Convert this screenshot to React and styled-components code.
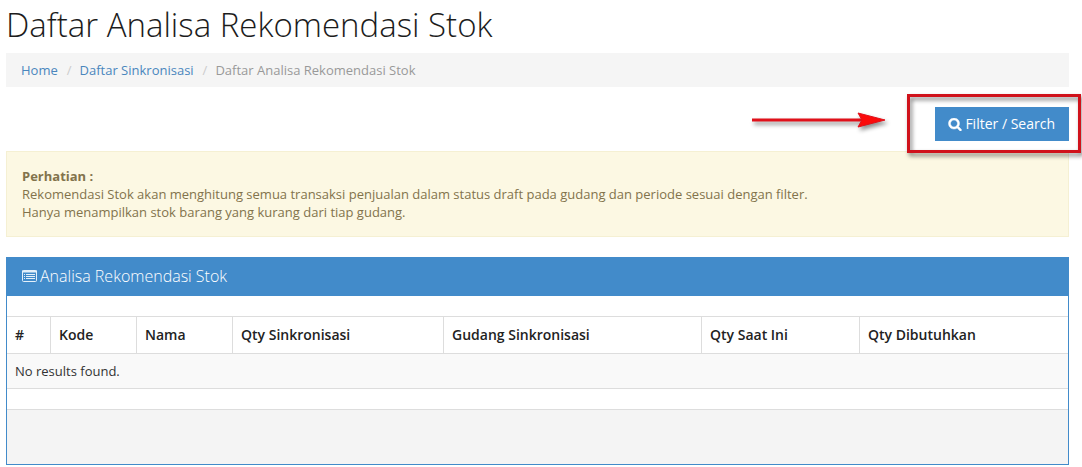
import React from "react";
import styled, { createGlobalStyle } from "styled-components";

const GlobalStyle = createGlobalStyle`
  *, *::before, *::after { box-sizing: border-box; }
  body {
    margin: 0;
    background: #fff;
    color: #333;
    font-family: "Open Sans", "Noto Sans", sans-serif;
    font-size: 13px;
    line-height: 18px;
  }
`;

const Page = styled.main`
  padding: 4px 13px 2px 6px;
`;

const Title = styled.h1`
  margin: 0 0 7px;
  font-size: 33px;
  font-weight: 300;
  line-height: 42px;
  color: #1c1c1c;
`;

const Breadcrumb = styled.ol`
  display: flex;
  margin: 0 0 20px;
  padding: 8px 15px;
  list-style: none;
  background: #f5f5f5;
  color: #999;
`;

const Crumb = styled.li`
  & + &::before {
    content: "/";
    padding: 0 8px 0 9px;
    color: #ccc;
  }
`;

const CrumbLink = styled.a`
  color: #4a86bd;
  text-decoration: none;
`;

const Toolbar = styled.div`
  display: flex;
  justify-content: flex-end;
  margin-bottom: 10px;
`;

const Callout = styled.div`
  position: relative;
`;

const FilterButton = styled.button`
  display: flex;
  align-items: center;
  gap: 3px;
  height: 34px;
  padding: 0 14px 0 13px;
  border: 0;
  background: #428bca;
  color: #fff;
  font: inherit;
  font-size: 14px;
  cursor: pointer;
`;

const HighlightBox = styled.span`
  position: absolute;
  inset: -13px -12px -12px -28px;
  border: 3px solid #d0121b;
  filter: drop-shadow(2px 3px 2px rgba(0, 0, 0, 0.5));
  pointer-events: none;
`;

const Arrow = styled.svg`
  position: absolute;
  right: 180px;
  top: 0;
  pointer-events: none;
  filter: drop-shadow(2px 3px 2px rgba(0, 0, 0, 0.45));
`;

const Notice = styled.div`
  margin-bottom: 20px;
  padding: 15px;
  border: 1px solid #f5f0d3;
  background: #fcf8e3;
  color: #82734c;
`;

const NoticeText = styled.p`
  margin: 0;
`;

const Panel = styled.section`
  border: 1px solid #428bca;
`;

const PanelHeading = styled.h2`
  display: flex;
  align-items: center;
  gap: 3px;
  margin: 0;
  height: 38px;
  padding: 0 15px 2px;
  background: #428bca;
  color: #fff;
  font-size: 16px;
  font-weight: 300;
`;

const PanelBody = styled.div`
  padding: 20px 0;
`;

const PanelFooter = styled.footer`
  height: 55px;
  border-top: 1px solid #ddd;
  background: #f4f4f4;
`;

const Table = styled.table`
  width: 100%;
  table-layout: fixed;
  border-collapse: separate;
  border-spacing: 0;
  border-top: 1px solid #ddd;
  border-bottom: 1px solid #ddd;
`;

const Column = styled.col`
  width: ${({ $width }) => $width}px;
`;

const HeaderCell = styled.th`
  height: 36px;
  padding: 0 8px;
  text-align: left;
  font-size: 14px;
  font-weight: 600;
  color: #222;
  white-space: nowrap;

  & + & {
    border-left: 1px solid #ddd;
  }
`;

const EmptyCell = styled.td`
  height: 35px;
  padding: 0 8px;
  border-top: 1px solid #ddd;
  background: #f9f9f9;
`;

const SearchIcon = () => (
  <svg width="14" height="13" viewBox="0 0 1664 1664" fill="currentColor" stroke="currentColor" strokeWidth="60" aria-hidden="true">
    <path d="M1152 704q0-185-131.500-316.500t-316.500-131.500-316.500 131.500-131.500 316.500 131.500 316.500 316.500 131.500 316.500-131.500 131.500-316.500zm512 832q0 52-38 90t-90 38q-54 0-90-38l-343-342q-179 124-399 124-143 0-273.500-55.500t-225-150-150-225-55.500-273.500 55.500-273.500 150-225 225-150 273.500-55.500 273.500 55.500 225 150 150 225 55.500 273.500q0 220-124 399l343 343q37 37 37 90z" />
  </svg>
);

const ListIcon = () => (
  <svg width="15" height="12" viewBox="0 0 15 12" aria-hidden="true">
    <rect x="0.5" y="0.5" width="14" height="11" rx="1" fill="none" stroke="#e4f0fa" />
    <path d="M0 0.500h15v2H0z" fill="#e4f0fa" />
    <path d="M2 4.500h1M4 4.500h9M2 6.500h1M4 6.500h9M2 8.500h1M4 8.500h9" stroke="#e4f0fa" strokeWidth="1" />
  </svg>
);

const columns = [
  { label: "#", width: 43 },
  { label: "Kode", width: 86 },
  { label: "Nama", width: 96 },
  { label: "Qty Sinkronisasi", width: 211 },
  { label: "Gudang Sinkronisasi", width: 258 },
  { label: "Qty Saat Ini", width: 158 },
  { label: "Qty Dibutuhkan", width: 209 },
];

export default function App() {
  return (
    <>
      <GlobalStyle />
      <Page>
        <Title>Daftar Analisa Rekomendasi Stok</Title>
        <nav aria-label="Breadcrumb">
          <Breadcrumb>
            <Crumb><CrumbLink href="#home">Home</CrumbLink></Crumb>
            <Crumb><CrumbLink href="#sinkronisasi">Daftar Sinkronisasi</CrumbLink></Crumb>
            <Crumb aria-current="page">Daftar Analisa Rekomendasi Stok</Crumb>
          </Breadcrumb>
        </nav>
        <Toolbar>
          <Callout>
            <FilterButton type="button">
              <SearchIcon />
              Filter / Search
            </FilterButton>
            <HighlightBox />
            <Arrow width="140" height="26" viewBox="0 0 140 26" aria-hidden="true">
              <path d="M3 13H120" stroke="#e0101a" strokeWidth="3" />
              <path d="M109 6L136 13L109 20L113 13Z" fill="#fb0a0a" stroke="#e0101a" strokeWidth="1" />
            </Arrow>
          </Callout>
        </Toolbar>
        <Notice role="note">
          <NoticeText><strong>Perhatian :</strong></NoticeText>
          <NoticeText>
            Rekomendasi Stok akan menghitung semua transaksi penjualan dalam status draft pada gudang dan periode sesuai dengan filter.
          </NoticeText>
          <NoticeText>Hanya menampilkan stok barang yang kurang dari tiap gudang.</NoticeText>
        </Notice>
        <Panel>
          <PanelHeading>
            <ListIcon />
            Analisa Rekomendasi Stok
          </PanelHeading>
          <PanelBody>
            <Table>
              <colgroup>
                {columns.map((c) => <Column key={c.label} $width={c.width} />)}
              </colgroup>
              <thead>
                <tr>
                  {columns.map((c) => <HeaderCell key={c.label} scope="col">{c.label}</HeaderCell>)}
                </tr>
              </thead>
              <tbody>
                <tr>
                  <EmptyCell colSpan={columns.length}>No results found.</EmptyCell>
                </tr>
              </tbody>
            </Table>
          </PanelBody>
          <PanelFooter />
        </Panel>
      </Page>
    </>
  );
}
